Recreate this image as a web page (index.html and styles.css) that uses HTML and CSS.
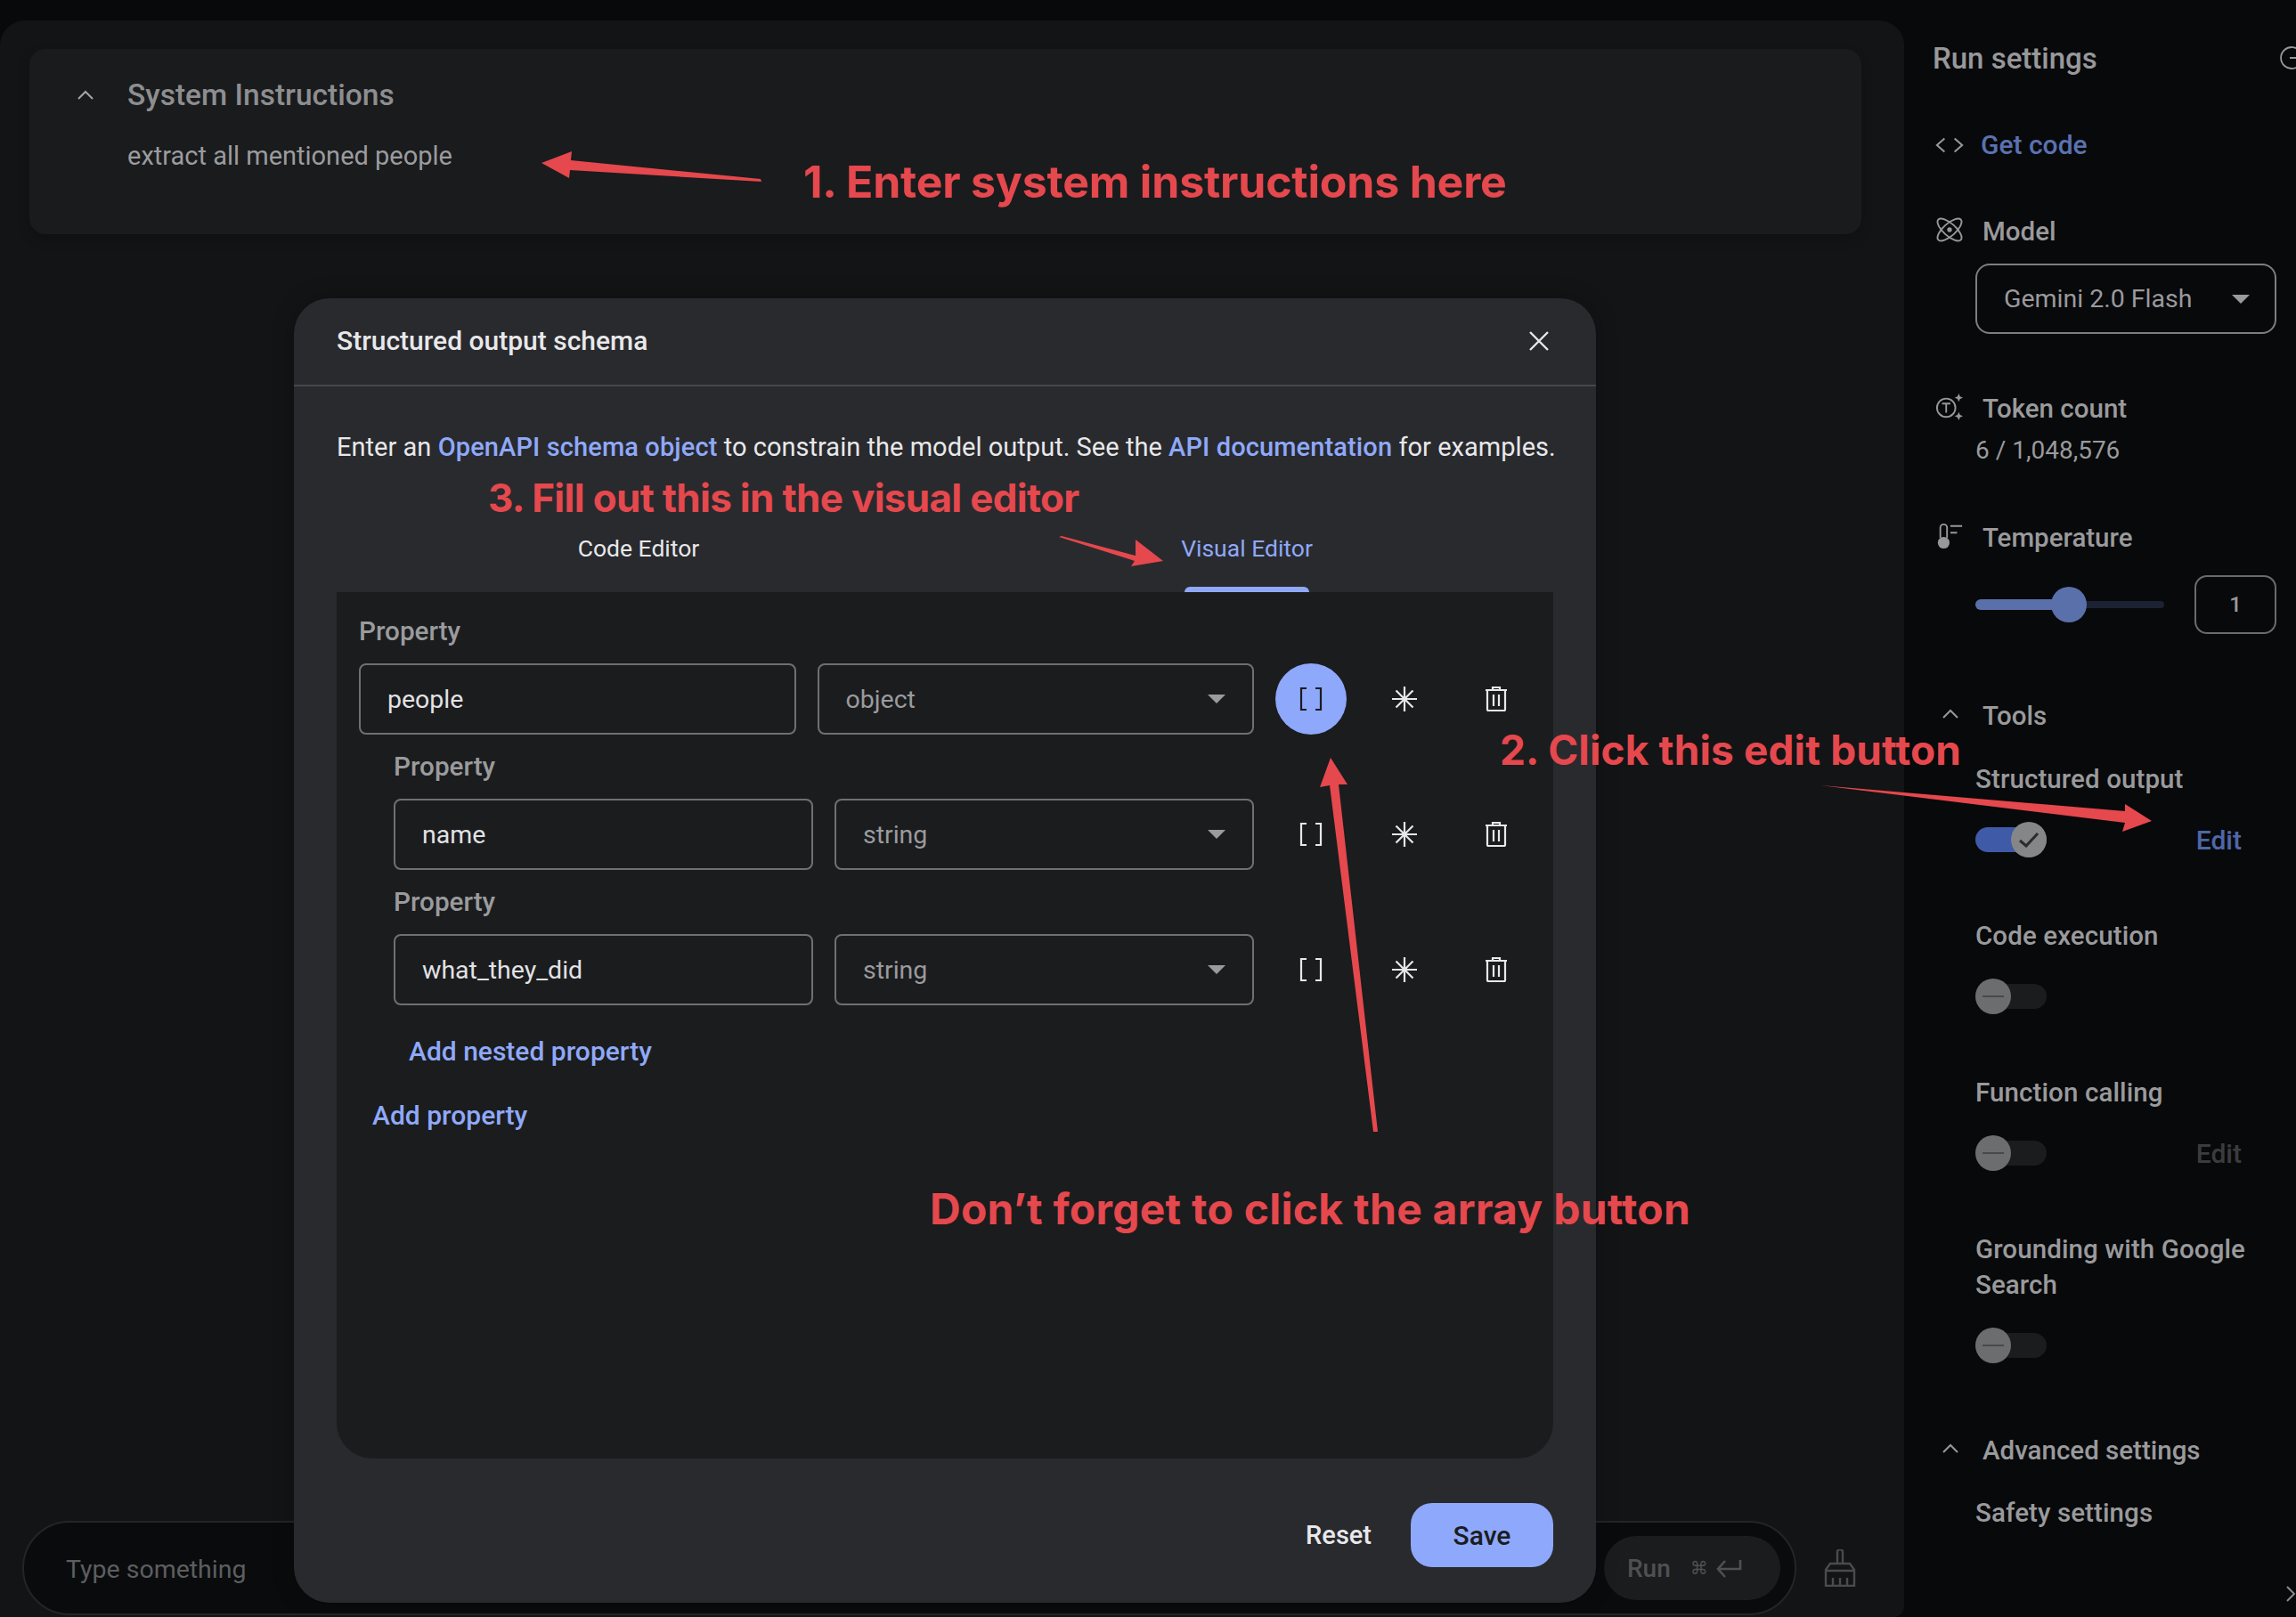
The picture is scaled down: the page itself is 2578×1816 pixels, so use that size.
FILE: index.html
```html
<!DOCTYPE html>
<html lang="en">
<head>
  <meta charset="UTF-8">
  <title>Structured output schema</title>
  <link rel="stylesheet" href="styles.css">
</head>
<body>

  <svg class="icon-defs" width="0" height="0">
    <symbol id="i-brackets" viewBox="0 0 26 26">
      <path d="M8 1H2v24h6M18 1h6v24h-6" fill="none" stroke="currentColor" stroke-width="2.2"/>
    </symbol>
    <symbol id="i-star" viewBox="0 0 28 28">
      <path d="M14 0v28M0 14h28M4.500 4.500l19 19M23.500 4.500l-19 19" fill="none" stroke="currentColor" stroke-width="2.200"/>
    </symbol>
    <symbol id="i-trash" viewBox="0 0 26 28">
      <path d="M1 4h24M9 3V1h8v2M3 4v22a1 1 0 0 0 1 1h18a1 1 0 0 0 1-1V4M10 9v13M16 9v13" fill="none" stroke="currentColor" stroke-width="2.200"/>
    </symbol>
    <symbol id="i-chev" viewBox="0 0 20 12">
      <path d="M2 10l8-8 8 8" fill="none" stroke="currentColor" stroke-width="2"/>
    </symbol>
  </svg>

  <div class="app">
    <main class="main">
      <section class="sys-card">
        <div class="sys-head">
          <svg class="sys-chev"><use href="#i-chev"/></svg>
          <span>System Instructions</span>
        </div>
        <p class="sys-text">extract all mentioned people</p>
      </section>

      <div class="input-row">
        <div class="input-bar">
          <span class="placeholder">Type something</span>
          <div class="run-btn">
            <span>Run</span>
            <span class="run-cmd">⌘</span>
            <svg class="run-return" viewBox="0 0 30 22"><path d="M28 2v10H3M11 3l-8 9 8 9" fill="none" stroke="currentColor" stroke-width="2.600"/></svg>
          </div>
        </div>
        <svg class="broom" viewBox="0 0 36 42"><path d="M15 16V3a3 3 0 0 1 6 0v13M7 16h22l5 7v18H2V23zM2 24h32M10 41v-9M18 41v-9M26 41v-9" fill="none" stroke="currentColor" stroke-width="2.400"/></svg>
      </div>
    </main>

    <aside class="side">
      <h2 class="side-title">Run settings</h2>
      <svg class="side-history" viewBox="0 0 40 40"><path d="M36 11a16 16 0 1 0 0 18M20 20h16" fill="none" stroke="currentColor" stroke-width="2.400"/></svg>

      <div class="head-row get-code">
        <svg class="side-icon" viewBox="0 0 34 24"><path d="M11 4L2 12l9 8M23 4l9 8-9 8" fill="none" stroke="currentColor" stroke-width="2.200"/></svg>
        <a class="side-link">Get code</a>
      </div>

      <div class="head-row model-head">
        <svg class="side-icon" viewBox="0 0 30 30"><g fill="none" stroke="currentColor" stroke-width="1.800"><ellipse cx="15" cy="15" rx="16" ry="6.500" transform="rotate(42 15 15)"/><ellipse cx="15" cy="15" rx="16" ry="6.500" transform="rotate(-42 15 15)"/></g><circle cx="15" cy="15" r="2.500" fill="currentColor"/></svg>
        <span>Model</span>
      </div>
      <div class="model-select">
        <span>Gemini 2.0 Flash</span>
        <i class="caret"></i>
      </div>

      <div class="head-row token-head">
        <svg class="side-icon" viewBox="0 0 34 34"><circle cx="13" cy="18" r="11" fill="none" stroke="currentColor" stroke-width="2"/><path d="M8 13h10M13 13v11" fill="none" stroke="currentColor" stroke-width="2"/><path d="M28 1l1.500 3.500L33 6l-3.500 1.500L28 11l-1.500-3.500L23 6l3.500-1.500zM28 23l1.500 3.500L33 28l-3.500 1.500L28 33l-1.500-3.500L23 28l3.500-1.500z" fill="currentColor"/></svg>
        <span>Token count</span>
      </div>
      <div class="token-value">6 / 1,048,576</div>

      <div class="head-row temp-head">
        <svg class="side-icon" viewBox="0 0 34 34"><path d="M6 19V7a4 4 0 0 1 8 0v12" fill="none" stroke="currentColor" stroke-width="2"/><circle cx="10" cy="25" r="7" fill="currentColor"/><path d="M18 5h14M18 13h8" fill="none" stroke="currentColor" stroke-width="2"/></svg>
        <span>Temperature</span>
      </div>
      <div class="temp-row">
        <div class="slider">
          <div class="slider-fill"></div>
          <div class="slider-thumb"></div>
        </div>
        <div class="temp-box">1</div>
      </div>

      <div class="head-row tools-head">
        <svg class="side-chev"><use href="#i-chev"/></svg>
        <span>Tools</span>
      </div>

      <div class="tool tool-first">
        <div class="tool-label">Structured output</div>
        <div class="tool-row">
          <div class="toggle toggle-on">
            <div class="toggle-thumb">
              <svg viewBox="0 0 24 18"><path d="M2 10l7 6L22 2" fill="none" stroke="#2a2b2d" stroke-width="3"/></svg>
            </div>
          </div>
          <span class="tool-edit">Edit</span>
        </div>
      </div>

      <div class="tool">
        <div class="tool-label">Code execution</div>
        <div class="tool-row">
          <div class="toggle"><div class="toggle-thumb"><i class="toggle-dash"></i></div></div>
        </div>
      </div>

      <div class="tool">
        <div class="tool-label">Function calling</div>
        <div class="tool-row">
          <div class="toggle"><div class="toggle-thumb"><i class="toggle-dash"></i></div></div>
          <span class="tool-edit tool-edit-off">Edit</span>
        </div>
      </div>

      <div class="tool">
        <div class="tool-label">Grounding with Google<br>Search</div>
        <div class="tool-row">
          <div class="toggle"><div class="toggle-thumb"><i class="toggle-dash"></i></div></div>
        </div>
      </div>

      <div class="head-row adv-head">
        <svg class="side-chev"><use href="#i-chev"/></svg>
        <span>Advanced settings</span>
      </div>
      <div class="tool-label safety">Safety settings</div>
      <svg class="side-more" viewBox="0 0 12 20"><path d="M2 2l8 8-8 8" fill="none" stroke="currentColor" stroke-width="2"/></svg>
    </aside>
  </div>

  <div class="modal">
    <header class="modal-head">
      <h2>Structured output schema</h2>
      <svg class="modal-close" viewBox="0 0 24 24"><path d="M2 2l20 20M22 2L2 22" fill="none" stroke="currentColor" stroke-width="2.400"/></svg>
    </header>

    <div class="modal-body">
      <p class="intro">Enter an <a>OpenAPI schema object</a> to constrain the model output. See the <a>API documentation</a> for examples.</p>

      <div class="tabs">
        <div class="tab"><span>Code Editor</span><i class="tab-bar"></i></div>
        <div class="tab tab-active"><span>Visual Editor</span><i class="tab-bar"></i></div>
      </div>

      <div class="editor">
        <div class="prop-label">Property</div>
        <div class="prop-row">
          <div class="field">people</div>
          <div class="field field-select"><span>object</span><i class="caret"></i></div>
          <div class="prop-actions">
            <span class="round-btn round-on"><svg class="ic-brackets"><use href="#i-brackets"/></svg></span>
            <span class="round-btn"><svg class="ic-star"><use href="#i-star"/></svg></span>
            <span class="round-btn"><svg class="ic-trash"><use href="#i-trash"/></svg></span>
          </div>
        </div>

        <div class="nested">
          <div class="prop-label">Property</div>
          <div class="prop-row">
            <div class="field">name</div>
            <div class="field field-select"><span>string</span><i class="caret"></i></div>
            <div class="prop-actions">
              <span class="round-btn"><svg class="ic-brackets"><use href="#i-brackets"/></svg></span>
              <span class="round-btn"><svg class="ic-star"><use href="#i-star"/></svg></span>
              <span class="round-btn"><svg class="ic-trash"><use href="#i-trash"/></svg></span>
            </div>
          </div>
          <div class="prop-label">Property</div>
          <div class="prop-row">
            <div class="field">what_they_did</div>
            <div class="field field-select"><span>string</span><i class="caret"></i></div>
            <div class="prop-actions">
              <span class="round-btn"><svg class="ic-brackets"><use href="#i-brackets"/></svg></span>
              <span class="round-btn"><svg class="ic-star"><use href="#i-star"/></svg></span>
              <span class="round-btn"><svg class="ic-trash"><use href="#i-trash"/></svg></span>
            </div>
          </div>
        </div>

        <a class="add-nested">Add nested property</a>
        <a class="add-prop">Add property</a>
      </div>

      <footer class="modal-foot">
        <span class="reset-btn">Reset</span>
        <span class="save-btn">Save</span>
      </footer>
    </div>
  </div>

  <!-- red annotations drawn over the screenshot -->
  <svg class="arrows" viewBox="0 0 2578 1816">
    <polygon points="854,201 855,204 640,191 639,200 608,183 642,170 641,180"/>
    <polygon points="1189,603 1192,602 1275,624 1275,606 1306,630 1270,636 1274,630"/>
    <polygon points="2044,882 2386,911 2386,903 2416,922 2383,934 2386,924"/>
    <polygon points="1542,1271 1547,1271 1503,881 1513,881 1494,851 1482,884 1493,882"/>
  </svg>
  <div class="note note-1">1. Enter system instructions here</div>
  <div class="note note-2">2. Click this edit button</div>
  <div class="note note-3">3. Fill out this in the visual editor</div>
  <div class="note note-4">Don’t forget to click the array button</div>

</body>
</html>
```

FILE: styles.css
```css
* {
  box-sizing: border-box;
}
body {
  margin: 0;
  width: 2578px;
  height: 1816px;
  overflow: hidden;
  background: #08090b;
  font-family: Roboto, "Noto Sans", sans-serif;
  font-size: 28px;
  color: #9a9a9c;
  position: relative;
}
.icon-defs {
  position: absolute;
}
h2, p {
  margin: 0;
  font-weight: 500;
}
.app {
  display: flex;
  height: 1816px;
}

/* main column */
.main {
  width: 2138px;
  margin-top: 23px;
  background: #131416;
  border-radius: 28px 28px 12px 0;
  display: flex;
  flex-direction: column;
  padding-top: 32px;
}
.sys-card {
  margin: 0 48px 0 33px;
  height: 208px;
  background: #1a1b1d;
  border-radius: 18px;
  padding: 32px 0 0 110px;
  box-shadow: 0 6px 14px rgba(0, 0, 0, 0.2);
}
.sys-head {
  position: relative;
  font-size: 33.500px;
  font-weight: 500;
  line-height: 40px;
  color: #8d8e90;
}
.sys-chev {
  position: absolute;
  left: -57px;
  top: 14px;
  width: 20px;
  height: 12px;
  color: #a5a6a8;
}
.sys-text {
  margin-top: 28px;
  font-size: 29px;
  line-height: 40px;
  font-weight: 400;
  color: #9b9c9e;
}
.input-row {
  margin-top: auto;
  margin-bottom: 2px;
  padding-left: 25px;
  display: flex;
  align-items: center;
}
.input-bar {
  width: 1992px;
  height: 106px;
  background: #0a0b0d;
  border: 2px solid #242528;
  border-radius: 53px;
  padding: 0 16px 0 47px;
  display: flex;
  align-items: center;
  justify-content: space-between;
}
.placeholder {
  font-size: 28.500px;
  padding-top: 2px;
  color: #5d5e60;
}
.run-btn {
  width: 198px;
  height: 72px;
  border-radius: 36px;
  background: #1b1c1e;
  color: #4f5052;
  font-weight: 500;
  display: flex;
  align-items: center;
  padding-left: 26px;
}
.run-cmd {
  margin-left: 22px;
  font-size: 20px;
  font-family: "DejaVu Sans", sans-serif;
}
.run-return {
  width: 30px;
  height: 22px;
  margin-left: 8px;
}
.broom {
  width: 36px;
  height: 42px;
  margin-left: 31px;
  color: #4a4b4d;
}

/* run settings */
.side {
  width: 440px;
  padding: 46px 0 0 32px;
  position: relative;
  font-size: 29.500px;
  line-height: 40px;
  font-weight: 500;
}
.side-title {
  font-size: 33px;
  line-height: 40px;
  color: #98989a;
}
.side-history {
  position: absolute;
  left: 418px;
  top: 50px;
  width: 30px;
  height: 30px;
  color: #98989a;
}
.head-row {
  display: flex;
  align-items: center;
  height: 40px;
}
.head-row span {
  padding-top: 3px;
}
.side-icon {
  width: 32px;
  height: 32px;
  margin: 0 21px 0 3px;
  flex: none;
  color: #98989a;
}
.side-chev {
  width: 20px;
  height: 12px;
  margin: 0 26px 0 10px;
  color: #98989a;
}
.get-code {
  margin-top: 57px;
}
.get-code .side-icon {
  margin-right: 19px;
}
.side-link {
  font-size: 30px;
  color: #5a72b0;
}
.model-head {
  margin-top: 55px;
}
.model-select {
  margin: 18px 0 0 48px;
  width: 338px;
  height: 79px;
  border: 2px solid #7d7e80;
  border-radius: 16px;
  display: flex;
  align-items: center;
  justify-content: space-between;
  padding: 0 28px 0 30px;
  font-size: 28.500px;
  font-weight: 400;
}
.caret {
  width: 0;
  height: 0;
  border-left: 10px solid transparent;
  border-right: 10px solid transparent;
  border-top: 10px solid currentColor;
}
.token-head {
  margin-top: 62px;
}
.token-value {
  margin: 9px 0 0 48px;
  font-size: 28px;
  font-weight: 400;
}
.temp-head {
  margin-top: 56px;
}
.temp-row {
  margin: 24px 0 0 48px;
  width: 338px;
  height: 66px;
  display: flex;
  align-items: center;
  justify-content: space-between;
}
.slider {
  width: 212px;
  height: 8px;
  border-radius: 4px;
  background: #1c2233;
  position: relative;
}
.slider-fill {
  width: 100px;
  height: 12px;
  margin-top: -2px;
  border-radius: 6px;
  background: #5a70ab;
  position: absolute;
  top: 0;
  left: 0;
}
.slider-thumb {
  width: 40px;
  height: 40px;
  border-radius: 50%;
  background: #5a70ab;
  position: absolute;
  left: 85px;
  top: -16px;
}
.temp-box {
  width: 92px;
  height: 66px;
  border: 2px solid #6a6b6d;
  border-radius: 14px;
  display: flex;
  align-items: center;
  justify-content: center;
  font-size: 24px;
}
.tools-head {
  margin-top: 70px;
}
.tool {
  margin: 68px 0 0 48px;
}
.tool-first {
  margin-top: 33px;
}
.tool-label {
  line-height: 40px;
  letter-spacing: 0.1px;
}
.tool-row {
  margin-top: 28px;
  height: 40px;
  display: flex;
  align-items: center;
  justify-content: space-between;
  width: 299px;
}
.toggle {
  width: 80px;
  height: 28px;
  border-radius: 14px;
  background: #1b1c1e;
  position: relative;
}
.toggle-on {
  background: #3f5aa6;
}
.toggle-thumb {
  width: 40px;
  height: 40px;
  border-radius: 50%;
  background: #6c6d6f;
  position: absolute;
  left: 0;
  top: -6px;
  display: flex;
  align-items: center;
  justify-content: center;
}
.toggle-on .toggle-thumb {
  left: 40px;
  background: #858688;
}
.toggle-on svg {
  width: 24px;
  height: 18px;
}
.toggle-dash {
  width: 24px;
  height: 2px;
  background: #48494b;
}
.tool-edit {
  font-size: 30px;
  padding-top: 2px;
  color: #4f66a8;
}
.tool-edit-off {
  color: #3b3c3e;
}
.adv-head {
  margin-top: 76px;
}
.safety {
  margin: 32px 0 0 48px;
}
.side-more {
  position: absolute;
  left: 428px;
  top: 1780px;
  width: 12px;
  height: 20px;
  color: #8a8b8d;
}

/* modal */
.modal {
  position: absolute;
  left: 330px;
  top: 335px;
  width: 1462px;
  height: 1465px;
  background: #292a2e;
  border-radius: 40px;
  color: #e8e8ea;
  font-size: 29px;
  box-shadow: 0 0 24px rgba(0, 0, 0, 0.25);
}
.modal-head {
  height: 99px;
  border-bottom: 2px solid #46474b;
  padding: 0 52px 2px 48px;
  display: flex;
  align-items: center;
  justify-content: space-between;
}
.modal-head h2 {
  font-size: 30px;
  line-height: 40px;
}
.modal-close {
  width: 24px;
  height: 24px;
}
.modal-body {
  padding: 0 48px;
}
.intro {
  margin-top: 48px;
  line-height: 40px;
  font-weight: 400;
  white-space: nowrap;
  letter-spacing: 0.03px;
}
.intro a {
  letter-spacing: 0.12px;
}
a {
  color: #8fa9f8;
  font-weight: 500;
}
.tabs {
  display: grid;
  grid-template-columns: 1fr 1fr;
  height: 143px;
  font-size: 26.500px;
}
.tab {
  display: flex;
  flex-direction: column;
  align-items: center;
  justify-content: flex-end;
  padding-right: 5px;
}
.tab span {
  line-height: 30px;
  margin-bottom: 28px;
}
.tab-bar {
  width: 140px;
  height: 6px;
  border-radius: 6px 6px 0 0;
}
.tab-active {
  color: #8fa9f8;
}
.tab-active .tab-bar {
  background: #8fa9f8;
}
.editor {
  height: 973px;
  background: #1b1c1e;
  border-radius: 0 0 40px 40px;
  padding: 24px 24px 0 25px;
}
.prop-label {
  font-size: 29.700px;
  line-height: 40px;
  color: #9a9b9d;
  font-weight: 500;
  margin-bottom: 16px;
}
.prop-row {
  display: flex;
  gap: 24px;
  height: 80px;
  margin-bottom: 16px;
}
.field {
  flex: 1;
  border: 2px solid #6f7072;
  border-radius: 8px;
  padding: 0 30px;
  display: flex;
  align-items: center;
  font-size: 28.500px;
  color: #e2e2e4;
}
.field-select {
  justify-content: space-between;
  color: #9a9b9d;
}
.prop-actions {
  display: flex;
  gap: 24px;
}
.round-btn {
  width: 80px;
  height: 80px;
  border-radius: 50%;
  display: flex;
  align-items: center;
  justify-content: center;
  color: #e8e8ea;
}
.round-on {
  background: #8ea8fb;
  color: #1b1c1e;
}
.ic-brackets {
  width: 26px;
  height: 26px;
}
.ic-star {
  width: 28px;
  height: 28px;
  margin-left: 2px;
}
.ic-trash {
  width: 26px;
  height: 28px;
}
.nested {
  margin-left: 39px;
}
.add-nested {
  display: block;
  font-size: 30px;
  line-height: 40px;
  margin: 32px 0 0 56px;
}
.add-prop {
  display: block;
  font-size: 30px;
  line-height: 40px;
  margin: 32px 0 0 15px;
}
.modal-foot {
  margin-top: 50px;
  display: flex;
  justify-content: flex-end;
  align-items: center;
  gap: 44px;
  font-weight: 500;
}
.save-btn {
  width: 160px;
  height: 72px;
  border-radius: 24px;
  background: #8ea8fb;
  color: #1b1c1e;
  font-size: 30px;
  display: flex;
  align-items: center;
  justify-content: center;
}

/* annotations */
.arrows {
  position: absolute;
  left: 0;
  top: 0;
  width: 2578px;
  height: 1816px;
  fill: #e5484d;
}
.note {
  position: absolute;
  font-family: Inter, sans-serif;
  font-weight: 700;
  color: #e5484d;
  white-space: nowrap;
  line-height: 60px;
}
.note-1 {
  left: 902px;
  top: 174px;
  font-size: 50px;
  letter-spacing: -0.2px;
}
.note-2 {
  left: 1684px;
  top: 812px;
  font-size: 46px;
  letter-spacing: 0.13px;
}
.note-3 {
  left: 548px;
  top: 529px;
  font-size: 44px;
  letter-spacing: -0.7px;
}
.note-4 {
  left: 1044px;
  top: 1328px;
  font-size: 48px;
  letter-spacing: 0.26px;
}
```
